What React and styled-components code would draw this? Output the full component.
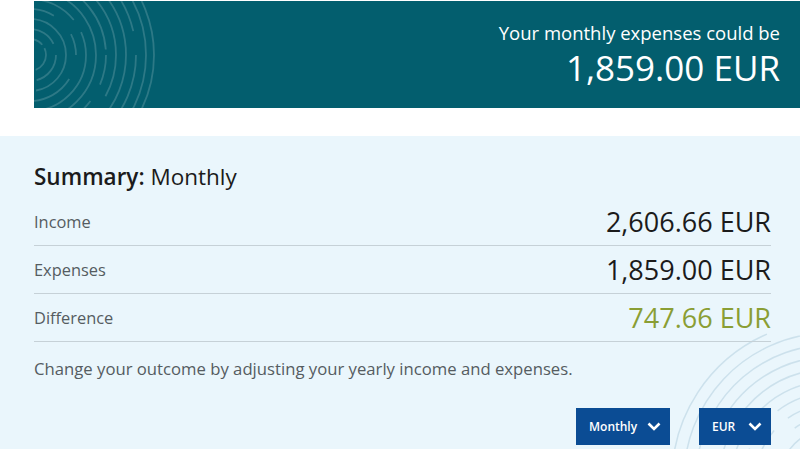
import React from 'react';
import styled, { createGlobalStyle } from 'styled-components';

const GlobalStyle = createGlobalStyle`
  html, body {
    margin: 0;
    padding: 0;
    background: #fff;
  }
  body {
    font-family: "Open Sans", "Noto Sans", "Liberation Sans", sans-serif;
    overflow: hidden;
  }
`;

const Page = styled.div`
  width: 800px;
  height: 449px;
  overflow: hidden;
`;

const Banner = styled.section`
  position: relative;
  overflow: hidden;
  margin: 1px 0 28px 34px;
  height: 107px;
  background: #035e6e;
  color: #fff;
  display: flex;
  flex-direction: column;
  align-items: flex-end;
  justify-content: center;
  padding-right: 20px;
`;

const BannerArt = styled.svg`
  position: absolute;
  left: 0;
  top: 0;
`;

const BannerLead = styled.div`
  position: relative;
  font-size: 18.5px;
  line-height: 26px;
`;

const BannerAmount = styled.div`
  position: relative;
  font-size: 35px;
  line-height: 44px;
`;

const Panel = styled.section`
  position: relative;
  overflow: hidden;
  background: #eaf6fc;
  height: 313px;
  padding: 27px 29px 0 34px;
  box-sizing: border-box;
`;

const PanelArt = styled.svg`
  position: absolute;
  right: 0;
  bottom: 0;
`;

const Content = styled.div`
  position: relative;
`;

const Title = styled.h2`
  margin: 0 0 7px;
  font-size: 22.5px;
  line-height: 28px;
  font-weight: 400;
  color: #1b1b1b;

  strong {
    font-weight: 600;
  }
`;

const Row = styled.div`
  display: flex;
  justify-content: space-between;
  align-items: center;
  height: 48px;
  border-bottom: 1px solid #c6d1d7;
  box-sizing: border-box;
`;

const Label = styled.span`
  font-size: 16.4px;
  color: #555c61;
`;

const Value = styled.span`
  font-size: 27px;
  color: ${p => (p.$positive ? '#8a9e34' : '#1b1b1b')};
`;

const Note = styled.p`
  margin: 15px 0 0;
  font-size: 16.7px;
  line-height: 24px;
  color: #555c61;
`;

const Controls = styled.div`
  display: flex;
  justify-content: flex-end;
  gap: 29px;
  margin-top: 27px;
`;

const Select = styled.button`
  display: flex;
  align-items: center;
  justify-content: space-between;
  width: ${p => p.$width}px;
  height: 37px;
  padding: 0 9px 0 13px;
  box-sizing: border-box;
  border: none;
  background: #0b4c94;
  color: #fff;
  font-family: inherit;
  font-size: 12px;
  font-weight: 600;
  cursor: pointer;
`;

const Chevron = () => (
  <svg width="14" height="9" viewBox="0 0 14 9">
    <polyline points="1.5,1.5 7,7 12.5,1.5" fill="none" stroke="#fff" strokeWidth="2.6" />
  </svg>
);

function arcs(cx, cy, radii, color, width) {
  return radii.map((r, i) => (
    <circle
      key={r}
      cx={cx}
      cy={cy}
      r={r}
      fill="none"
      stroke={color}
      strokeWidth={width}
      strokeDasharray={`${r * (1.2 + (i % 3) * 0.5)} ${r * (0.25 + (i % 2) * 0.3)}`}
      strokeDashoffset={r * (i % 4) * 0.4}
    />
  ));
}

const rows = [
  { label: 'Income', value: '2,606.66 EUR' },
  { label: 'Expenses', value: '1,859.00 EUR' },
  { label: 'Difference', value: '747.66 EUR', positive: true },
];

export default function App() {
  return (
    <Page>
      <GlobalStyle />
      <Banner>
        <BannerArt width="160" height="107" viewBox="0 0 160 107">
          {arcs(-4, 54, [16, 26, 36, 46, 56, 66, 76, 86, 96, 106, 116, 124], 'rgba(255,255,255,0.17)', 1.8)}
        </BannerArt>
        <BannerLead>Your monthly expenses could be</BannerLead>
        <BannerAmount>1,859.00 EUR</BannerAmount>
      </Banner>
      <Panel>
        <PanelArt width="170" height="120" viewBox="0 0 170 120">
          {arcs(200, 150, [50, 62, 74, 86, 98, 110, 122, 134, 146, 158], 'rgba(150,185,205,0.35)', 1.5)}
        </PanelArt>
        <Content>
          <Title>
            <strong>Summary:</strong> Monthly
          </Title>
          {rows.map(r => (
            <Row key={r.label}>
              <Label>{r.label}</Label>
              <Value $positive={r.positive}>{r.value}</Value>
            </Row>
          ))}
          <Note>Change your outcome by adjusting your yearly income and expenses.</Note>
          <Controls>
            <Select $width={94}>
              Monthly <Chevron />
            </Select>
            <Select $width={72}>
              EUR <Chevron />
            </Select>
          </Controls>
        </Content>
      </Panel>
    </Page>
  );
}
